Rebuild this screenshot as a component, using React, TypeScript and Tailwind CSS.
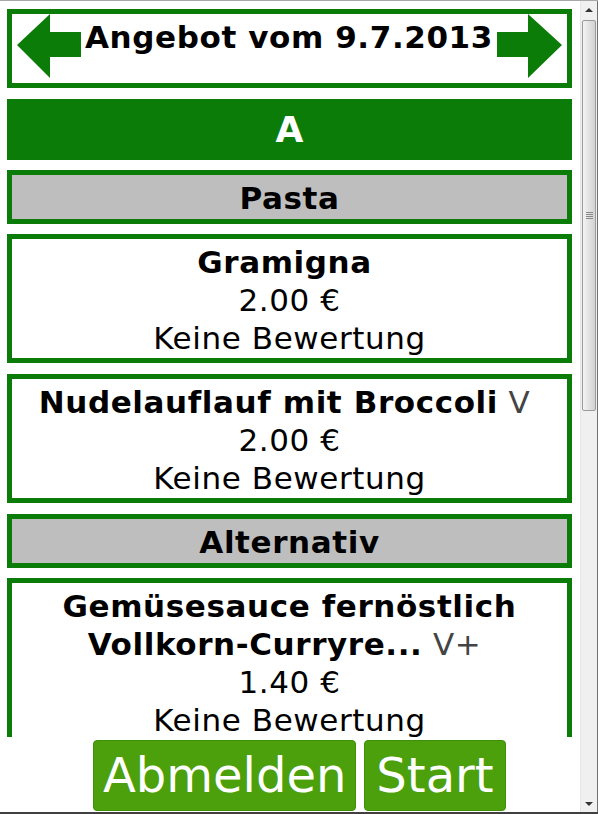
import React from "react";

const F = { fontFamily: '"DejaVu Sans", Verdana, sans-serif' };

function LeftArrow() {
  return (
    <svg width="64" height="64" viewBox="0 0 64 64" className="shrink-0">
      <polygon points="0,31 33,0 33,18 64,18 64,43 33,43 33,64" fill="#0c7c09" />
    </svg>
  );
}
function RightArrow() {
  return (
    <svg width="65" height="64" viewBox="0 0 65 64" className="shrink-0">
      <polygon points="0,18 31,18 31,0 65,31 31,64 31,43 0,43" fill="#0c7c09" />
    </svg>
  );
}

function Dish({ name, tag, price }: { name: React.ReactNode; tag: string; price: string }) {
  return (
    <div className="ml-[7px] w-[565px] border-[5px] border-[#0c7c09] bg-white pt-[4px] pb-[1px] text-center text-[31px] leading-[38px] tracking-[0.6px] text-black">
      <div>
        <span className="font-bold">{name}</span>
        {tag && <span className="text-[#444]"> {tag}</span>}
        <span className="inline-block w-[10px]" />
      </div>
      <div>{price}</div>
      <div>Keine Bewertung</div>
    </div>
  );
}

function Category({ title }: { title: string }) {
  return (
    <div className="ml-[7px] w-[565px] border-[5px] border-[#0c7c09]">
      <div className="h-[44px] bg-[#bebebe] pt-[1px] text-center text-[31px] font-bold leading-[44px] tracking-[0.6px] text-black">{title}</div>
    </div>
  );
}

function Scrollbar() {
  return (
    <div className="flex h-full w-[17px] flex-col bg-[#f0f0f0] border-l border-[#e6e6e6]">
      <div className="flex h-[17px] items-center justify-center">
        <div className="h-0 w-0 border-x-[4px] border-b-[4px] border-x-transparent border-b-[#333]" />
      </div>
      <div className="mx-[1px] mt-[2px] h-[391px] rounded-[2px] border border-[#9a9a9a] bg-gradient-to-r from-[#f4f4f4] via-[#e2e2e2] to-[#d2d2d2] flex items-center justify-center">
        <div className="flex flex-col gap-[1px]">
          <div className="h-[1px] w-[7px] bg-[#888]" />
          <div className="h-[1px] w-[7px] bg-[#888]" />
          <div className="h-[1px] w-[7px] bg-[#888]" />
          <div className="h-[1px] w-[7px] bg-[#888]" />
        </div>
      </div>
      <div className="flex-1" />
      <div className="flex h-[17px] items-center justify-center">
        <div className="h-0 w-0 border-x-[4px] border-t-[4px] border-x-transparent border-t-[#333]" />
      </div>
    </div>
  );
}

export default function App() {
  return (
    <div style={F} className="relative h-[814px] w-[598px] overflow-hidden bg-white">
      <div className="flex h-[812px] w-[598px] flex-col border-t border-[#a8a8a8]">
        <div className="flex h-[811px] w-[598px] flex-row">
          <div className="flex w-[580px] flex-col">
            <div className="h-[736px] overflow-hidden">
              <div className="pt-[8px]">
                <div className="ml-[7px] w-[565px] border-[5px] border-[#0c7c09]">
                  <div className="flex h-[69px] items-start px-[5px]">
                    <LeftArrow />
                    <div className="flex-1 pt-[6px] text-center text-[31px] font-bold leading-[35px] tracking-[0.6px] text-black whitespace-nowrap">
                      Angebot vom 9.7.2013
                    </div>
                    <RightArrow />
                  </div>
                </div>
                <div className="mt-[11px] ml-[7px] flex h-[61px] w-[565px] items-center justify-center bg-[#0c7c09] pt-[1px] text-[36px] font-bold text-white">
                  A
                </div>
                <div className="mt-[10px]"><Category title="Pasta" /></div>
                <div className="mt-[10px]"><Dish name="Gramigna" tag="" price="2.00 €" /></div>
                <div className="mt-[11px]"><Dish name="Nudelauflauf mit Broccoli" tag="V" price="2.00 €" /></div>
                <div className="mt-[11px]"><Category title="Alternativ" /></div>
                <div className="mt-[10px]">
                  <Dish name={<>Gemüsesauce fernöstlich<br />Vollkorn-Curryre...</>} tag="V+" price="1.40 €" />
                </div>
              </div>
            </div>
            <div className="flex flex-1 items-start pl-[93px] pt-[3px] gap-[8px]">
              <button className="h-[71px] rounded-[4px] border border-[#3f8f0a] bg-[#4ba00b] px-[9px] text-[48px] leading-[69px] text-white">
                Abmelden
              </button>
              <button className="h-[71px] rounded-[4px] border border-[#3f8f0a] bg-[#4ba00b] px-[11px] text-[48px] leading-[69px] text-white">
                Start
              </button>
            </div>
          </div>
          <Scrollbar />
          <div className="w-[1px] bg-[#707070]" />
        </div>
      </div>
      <div className="h-[2px] w-[598px] bg-[#404040]" />
    </div>
  );
}
